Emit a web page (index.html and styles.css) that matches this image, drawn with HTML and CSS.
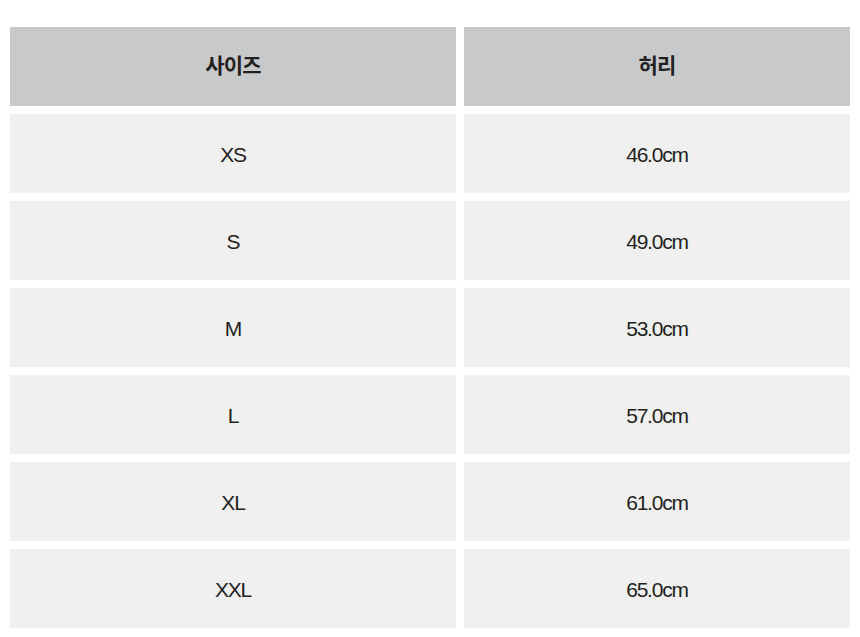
FILE: index.html
```html
<!DOCTYPE html>
<html lang="ko">
<head>
<meta charset="utf-8">
<link rel="stylesheet" href="styles.css">
</head>
<body>
<div class="table">
  <div class="cell head">사이즈</div><div class="cell head">허리</div>
  <div class="cell">XS</div><div class="cell">46.0cm</div>
  <div class="cell">S</div><div class="cell">49.0cm</div>
  <div class="cell">M</div><div class="cell">53.0cm</div>
  <div class="cell">L</div><div class="cell">57.0cm</div>
  <div class="cell">XL</div><div class="cell">61.0cm</div>
  <div class="cell">XXL</div><div class="cell">65.0cm</div>
</div>
</body>
</html>
```
FILE: styles.css
```css
html, body {
  margin: 0;
  padding: 0;
  background: #ffffff;
}
body {
  padding: 27px 0 0 10px;
  font-family: "Liberation Sans", "Noto Sans CJK KR", sans-serif;
  color: #231f20;
}
.table {
  display: grid;
  grid-template-columns: 446px 386px;
  grid-auto-rows: 79px;
  column-gap: 8px;
  row-gap: 8px;
}
.cell {
  background: #f0f0f0;
  display: flex;
  align-items: center;
  justify-content: center;
  font-size: 21px;
  letter-spacing: -1.2px;
  padding-top: 3px;
}
.head {
  background: #c8c9ca;
  font-family: "Noto Sans CJK KR", sans-serif;
  font-size: 21px;
  font-weight: 700;
  letter-spacing: -0.8px;
  padding-top: 0;
  padding-bottom: 5px;
}
```
